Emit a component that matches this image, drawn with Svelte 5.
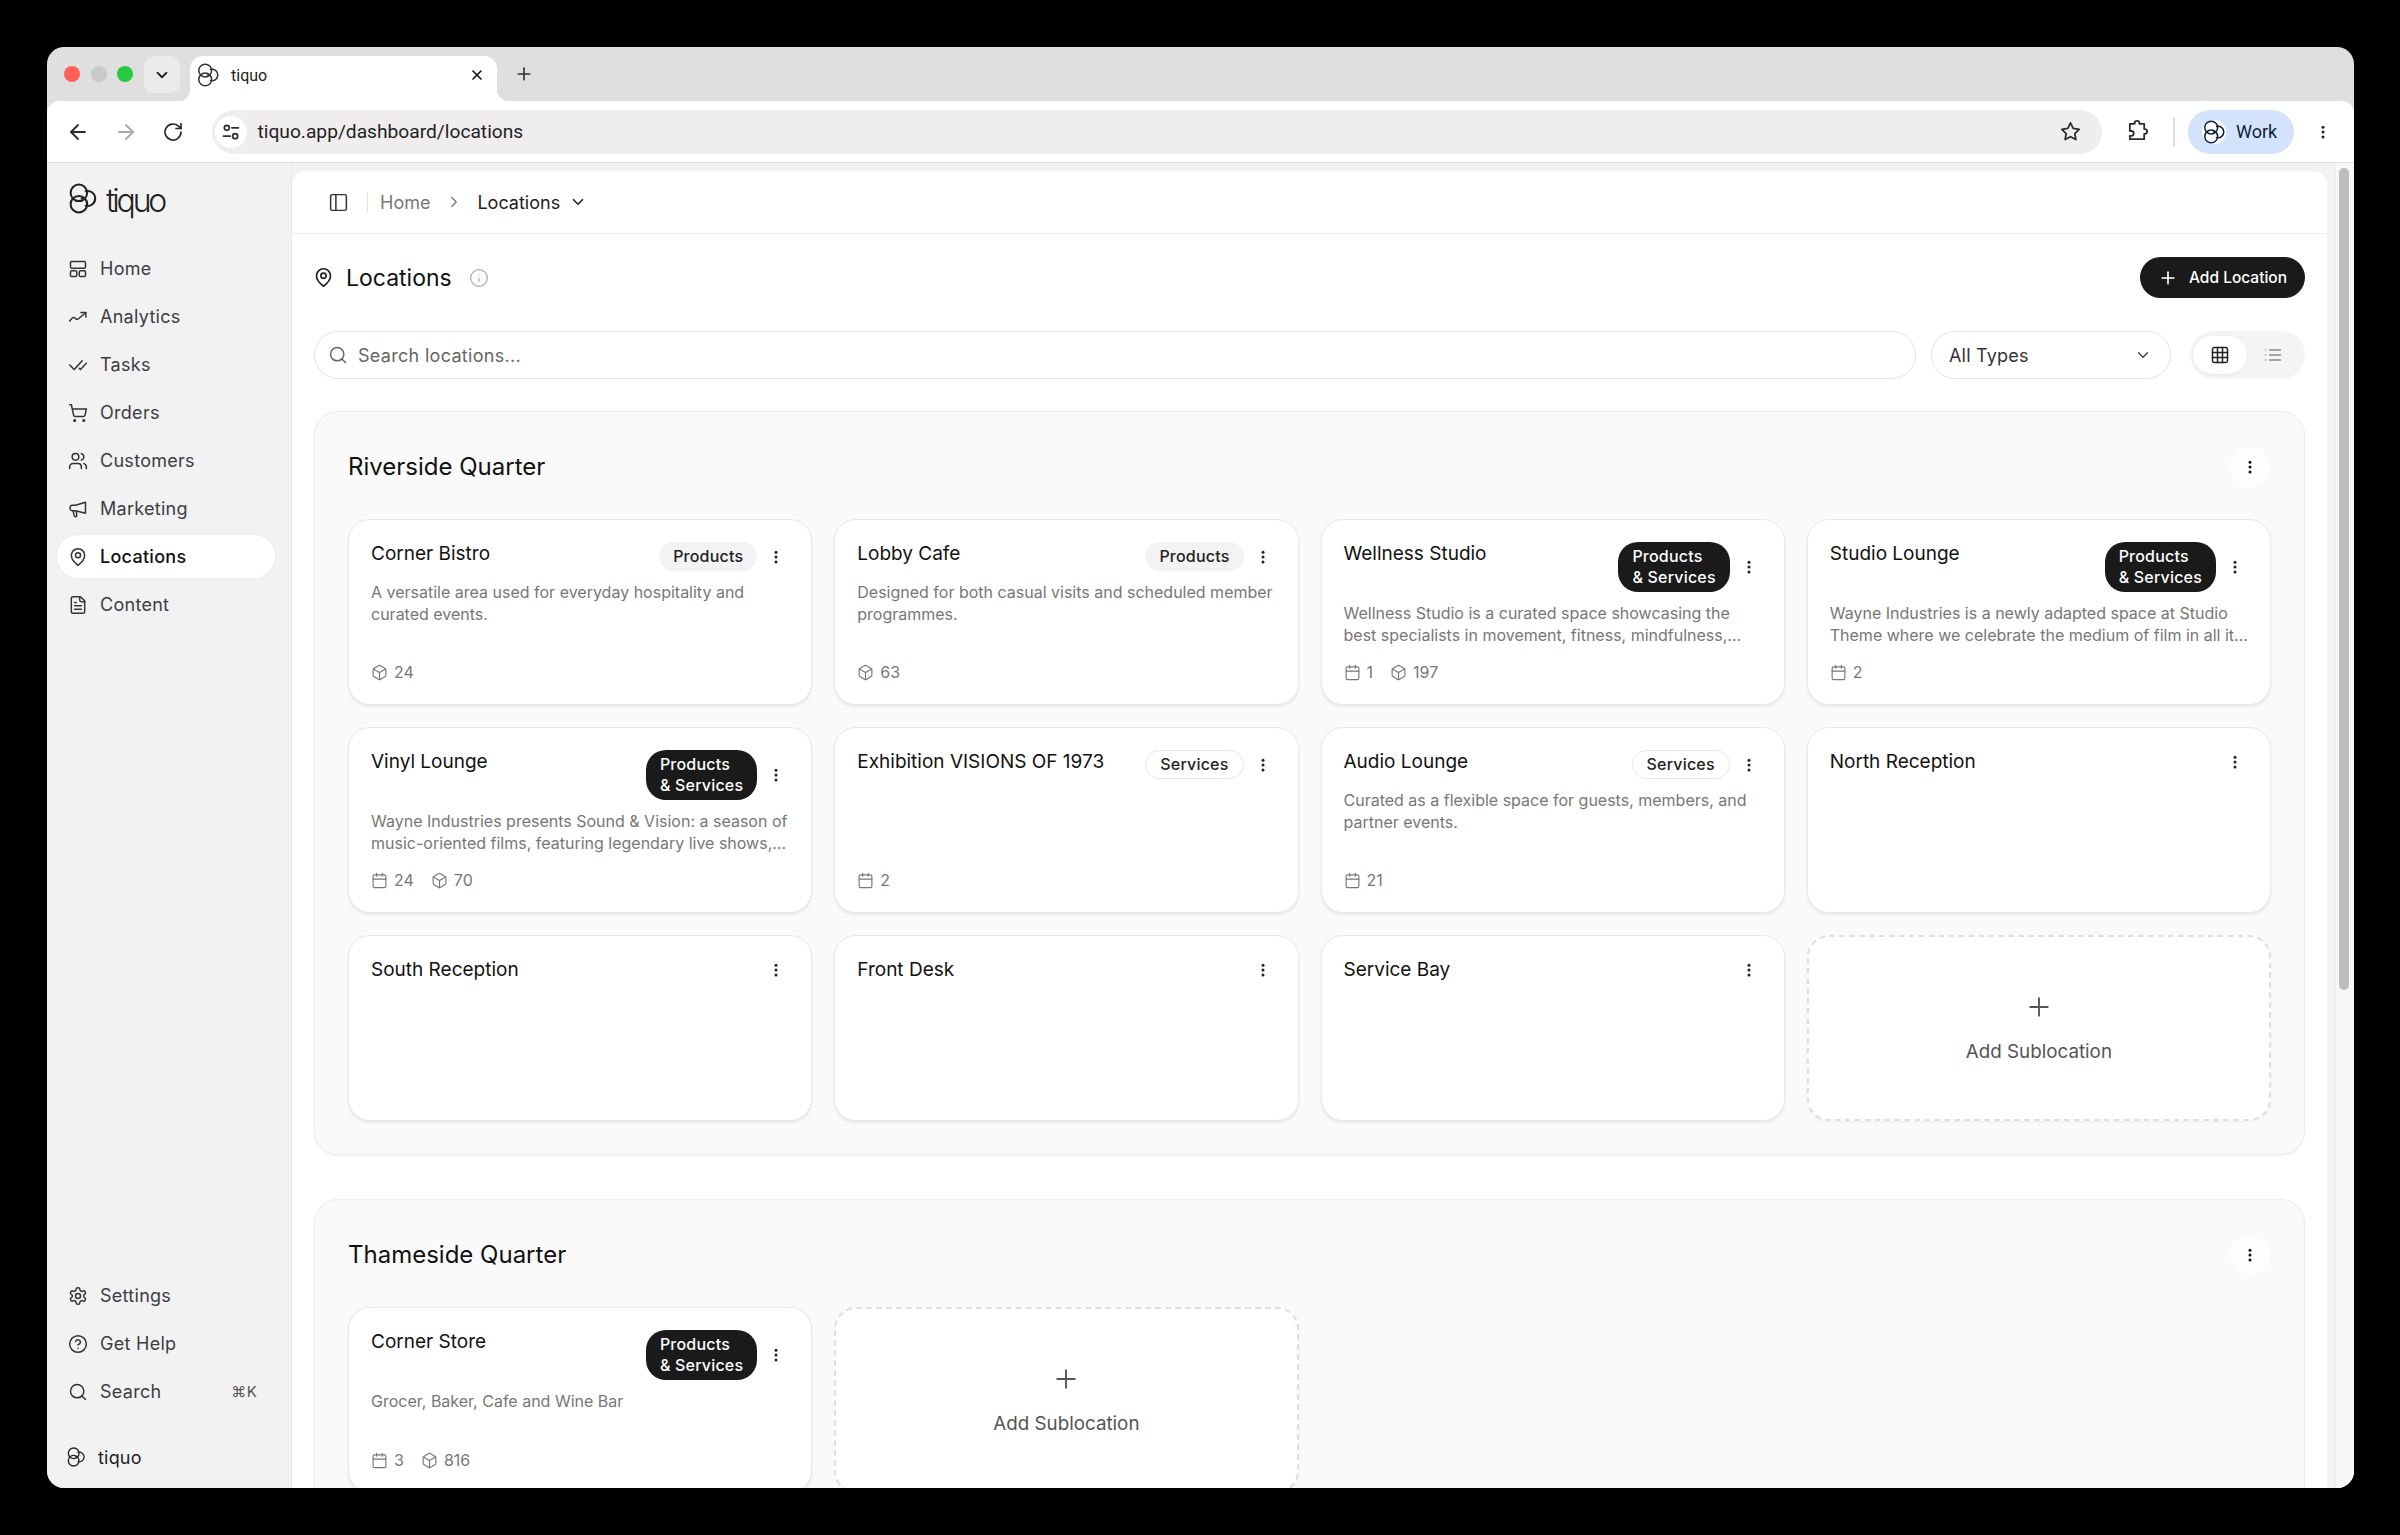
<script>
  const icons = {
    home: '<rect x="3" y="3" width="18" height="8" rx="1.5"/><rect x="3" y="14" width="7.5" height="7" rx="1.5"/><rect x="13.5" y="14" width="7.5" height="7" rx="1.5"/>',
    trend: '<path d="M2 17c2-3 3.500-4.500 5-4.500s2.500 2.500 4 2.500S17 10 21 7"/><path d="M15.500 6.500H21.500V12"/>',
    tasks: '<path d="M17 7 7.500 17.500 2 12"/><path d="m22 10-7 7.500-1.500-1.500"/>',
    cart: '<circle cx="8" cy="21" r="1"/><circle cx="19" cy="21" r="1"/><path d="M2.050 2.050h2l2.660 12.420a2 2 0 0 0 2 1.580h9.780a2 2 0 0 0 1.950-1.570l1.650-7.430H5.120"/>',
    users: '<path d="M16 21v-2a4 4 0 0 0-4-4H6a4 4 0 0 0-4 4v2"/><circle cx="9" cy="7" r="4"/><path d="M22 21v-2a4 4 0 0 0-3-3.870"/><path d="M16 3.130a4 4 0 0 1 0 7.750"/>',
    megaphone: '<path d="M21 4v13L9 14H5a2.500 2.500 0 0 1-2.500-2.500V10A2.500 2.500 0 0 1 5 7.500h4z"/><path d="m6 14 1.500 6a1.500 1.500 0 0 0 3-.500L10 14.500"/>',
    pin: '<path d="M20 10c0 6-8 12-8 12s-8-6-8-12a8 8 0 0 1 16 0Z"/><circle cx="12" cy="10" r="3"/>',
    file: '<path d="M15 2H6a2 2 0 0 0-2 2v16a2 2 0 0 0 2 2h12a2 2 0 0 0 2-2V7Z"/><path d="M14 2v4a2 2 0 0 0 2 2h4"/><path d="M16 13H8"/><path d="M16 17H8"/><path d="M10 9H8"/>',
    gear: '<path d="M12.220 2h-.440a2 2 0 0 0-2 2v.180a2 2 0 0 1-1 1.730l-.430.250a2 2 0 0 1-2 0l-.150-.080a2 2 0 0 0-2.730.730l-.220.380a2 2 0 0 0 .730 2.730l.150.100a2 2 0 0 1 1 1.720v.510a2 2 0 0 1-1 1.740l-.150.090a2 2 0 0 0-.730 2.730l.220.380a2 2 0 0 0 2.730.730l.150-.080a2 2 0 0 1 2 0l.430.250a2 2 0 0 1 1 1.730V20a2 2 0 0 0 2 2h.440a2 2 0 0 0 2-2v-.180a2 2 0 0 1 1-1.730l.430-.250a2 2 0 0 1 2 0l.150.080a2 2 0 0 0 2.730-.730l.220-.390a2 2 0 0 0-.730-2.730l-.150-.080a2 2 0 0 1-1-1.740v-.500a2 2 0 0 1 1-1.740l.150-.090a2 2 0 0 0 .730-2.730l-.220-.380a2 2 0 0 0-2.730-.730l-.150.080a2 2 0 0 1-2 0l-.430-.250a2 2 0 0 1-1-1.730V4a2 2 0 0 0-2-2z"/><circle cx="12" cy="12" r="3"/>',
    help: '<circle cx="12" cy="12" r="10"/><path d="M9.090 9a3 3 0 0 1 5.830 1c0 2-3 3-3 3"/><path d="M12 17h.010"/>',
    search: '<circle cx="11" cy="11" r="8"/><path d="m21 21-4.300-4.300"/>',
    box: '<path d="M21 8a2 2 0 0 0-1-1.730l-7-4a2 2 0 0 0-2 0l-7 4A2 2 0 0 0 3 8v8a2 2 0 0 0 1 1.730l7 4a2 2 0 0 0 2 0l7-4A2 2 0 0 0 21 16Z"/><path d="m3.300 7 8.700 5 8.700-5"/><path d="M12 22V12"/>',
    calendar: '<rect x="3" y="4" width="18" height="18" rx="2"/><path d="M16 2v4"/><path d="M8 2v4"/><path d="M3 10h18"/>',
    panel: '<rect x="3" y="3" width="18" height="18" rx="2"/><path d="M9 3v18"/>',
    info: '<circle cx="12" cy="12" r="10"/><path d="M12 16v-4"/><path d="M12 8h.010"/>',
    grid: '<rect x="3" y="3" width="18" height="18" rx="2"/><path d="M3 9h18"/><path d="M3 15h18"/><path d="M9 3v18"/><path d="M15 3v18"/>',
    list: '<path d="M3 6h.010"/><path d="M3 12h.010"/><path d="M3 18h.010"/><path d="M8 6h13"/><path d="M8 12h13"/><path d="M8 18h13"/>',
    plus: '<path d="M5 12h14"/><path d="M12 5v14"/>',
    down: '<path d="m6 9 6 6 6-6"/>',
    right: '<path d="m9 18 6-6-6-6"/>',
    close: '<path d="M18 6 6 18"/><path d="m6 6 12 12"/>',
    back: '<path d="m12 19-7-7 7-7"/><path d="M19 12H5"/>',
    forward: '<path d="M5 12h14"/><path d="m12 5 7 7-7 7"/>',
    reload: '<path d="M20 12a8 8 0 1 1-2.500-5.800L20 8.500"/><path d="M20 3.500v5h-5"/>',
    tune: '<circle cx="7" cy="7" r="3"/><path d="M13 7h8"/><circle cx="17" cy="17" r="3"/><path d="M3 17h8"/>',
    star: '<path d="m12 3 2.800 5.800 6.200.900-4.500 4.400 1.100 6.300L12 17.400l-5.600 3 1.100-6.300L3 9.700l6.200-.900z"/>',
    puzzle: '<path d="M4 4h5V3.500a2.500 2.500 0 0 1 5 0V4h5v5.500h.500a2.500 2.500 0 0 1 0 5H19V20H4v-3.500h1.500a2.500 2.500 0 0 0 0-5H4z"/>',
    logo: '<circle cx="9.200" cy="7.600" r="6.400"/><circle cx="9.200" cy="16.400" r="6.400"/><path d="M14.500 6.400a5.800 5.800 0 1 1 0 11.200"/><path d="M13.850 12h-2.500"/>'
  };

  const topNav = [
    ["home", "Home"],
    ["trend", "Analytics"],
    ["tasks", "Tasks"],
    ["cart", "Orders"],
    ["users", "Customers"],
    ["megaphone", "Marketing"],
    ["pin", "Locations"],
    ["file", "Content"]
  ];

  const both = "Products\n& Services";

  const riverside = [
    { name: "Corner Bistro", badge: "Products", kind: "soft", desc: "A versatile area used for everyday hospitality and curated events.", box: 24 },
    { name: "Lobby Cafe", badge: "Products", kind: "soft", desc: "Designed for both casual visits and scheduled member programmes.", box: 63 },
    { name: "Wellness Studio", badge: both, kind: "dark", desc: "Wellness Studio is a curated space showcasing the best specialists in movement, fitness, mindfulness,...", cal: 1, box: 197 },
    { name: "Studio Lounge", badge: both, kind: "dark", desc: "Wayne Industries is a newly adapted space at Studio Theme where we celebrate the medium of film in all it...", cal: 2 },
    { name: "Vinyl Lounge", badge: both, kind: "dark", desc: "Wayne Industries presents Sound & Vision: a season of music-oriented films, featuring legendary live shows,...", cal: 24, box: 70 },
    { name: "Exhibition VISIONS OF 1973", badge: "Services", kind: "outline", cal: 2 },
    { name: "Audio Lounge", badge: "Services", kind: "outline", desc: "Curated as a flexible space for guests, members, and partner events.", cal: 21 },
    { name: "North Reception" },
    { name: "South Reception" },
    { name: "Front Desk" },
    { name: "Service Bay" }
  ];

  const thameside = [
    { name: "Corner Store", badge: both, kind: "dark", desc: "Grocer, Baker, Cafe and Wine Bar", cal: 3, box: 816 }
  ];

  const sections = [
    { title: "Riverside Quarter", cards: riverside },
    { title: "Thameside Quarter", cards: thameside }
  ];
</script>

{#snippet icon(name, size = 18, weight = 2)}
  <svg class="icon" width={size} height={size} viewBox="0 0 24 24" fill="none" stroke="currentColor" stroke-width={weight} stroke-linecap="round" stroke-linejoin="round">
    {@html icons[name]}
  </svg>
{/snippet}

{#snippet kebab()}
  <svg class="icon" width="18" height="18" viewBox="0 0 24 24" fill="currentColor"><circle cx="12" cy="5.500" r="2"/><circle cx="12" cy="12" r="2"/><circle cx="12" cy="18.500" r="2"/></svg>
{/snippet}

<div class="screen">
  <div class="window">
    <div class="tabstrip">
      <div class="lights">
        <span class="dot red"></span>
        <span class="dot grey"></span>
        <span class="dot green"></span>
      </div>
      <div class="tabsearch">{@render icon("down", 18, 2.4)}</div>
      <div class="tab">
        <span class="tabicon">{@render icon("logo", 24, 1.5)}</span>
        <span class="tabtitle">tiquo</span>
        <span class="tabclose">{@render icon("close", 16, 2.4)}</span>
      </div>
      <div class="newtab">{@render icon("plus", 20, 2)}</div>
    </div>

    <div class="toolbar">
      <span class="navbtn">{@render icon("back", 24, 1.8)}</span>
      <span class="navbtn off">{@render icon("forward", 24, 1.8)}</span>
      <span class="navbtn">{@render icon("reload", 24, 1.7)}</span>
      <div class="omnibox">
        <span class="sitechip">{@render icon("tune", 20, 2)}</span>
        <span class="url">tiquo.app/dashboard/locations</span>
        <span class="star">{@render icon("star", 23, 1.8)}</span>
      </div>
      <span class="ext">{@render icon("puzzle", 23, 1.9)}</span>
      <span class="tbsep"></span>
      <div class="profile">
        <span class="profileicon">{@render icon("logo", 24, 1.5)}</span>
        <span>Work</span>
      </div>
      <span class="chromemenu">{@render kebab()}</span>
    </div>

    <div class="app">
      <aside class="sidebar">
        <div class="brand">
          <span class="brandmark">{@render icon("logo", 31, 1.6)}</span>
          <span class="wordmark">tiquo</span>
        </div>
        <nav class="nav">
          {#each topNav as [ic, label]}
            <div class="navitem" class:active={label === "Locations"}>
              {@render icon(ic, 20, 1.8)}
              <span>{label}</span>
            </div>
          {/each}
        </nav>
        <div class="nav bottom">
          <div class="navitem">{@render icon("gear", 20, 1.8)}<span>Settings</span></div>
          <div class="navitem">{@render icon("help", 20, 1.8)}<span>Get Help</span></div>
          <div class="navitem">
            {@render icon("search", 20, 1.8)}<span>Search</span>
            <kbd>⌘K</kbd>
          </div>
        </div>
        <div class="org">
          {@render icon("logo", 20, 1.6)}
          <span>tiquo</span>
        </div>
      </aside>

      <main class="main">
        <header class="crumbs">
          <span class="panelbtn">{@render icon("panel", 21, 1.7)}</span>
          <span class="crumbsep"></span>
          <span class="crumb">Home</span>
          <span class="crumbarrow">{@render icon("right", 18, 1.7)}</span>
          <span class="crumb current">Locations</span>
          <span class="crumbdown">{@render icon("down", 18, 2.2)}</span>
        </header>

        <div class="content">
          <div class="titlerow">
            <span class="titlepin">{@render icon("pin", 21, 1.9)}</span>
            <h1>Locations</h1>
            <span class="titleinfo">{@render icon("info", 20, 1.5)}</span>
            <button class="addbtn">{@render icon("plus", 20, 2)}<span>Add Location</span></button>
          </div>

          <div class="filters">
            <div class="searchbox">
              {@render icon("search", 20, 1.8)}
              <span>Search locations...</span>
            </div>
            <div class="select">
              <span>All Types</span>
              {@render icon("down", 18, 1.6)}
            </div>
            <div class="viewtoggle">
              <span class="viewbtn on">{@render icon("grid", 20, 1.8)}</span>
              <span class="viewbtn">{@render icon("list", 20, 1.6)}</span>
            </div>
          </div>

          {#each sections as section}
            <section class="group">
              <div class="grouphead">
                <h2>{section.title}</h2>
                <span class="groupmenu">{@render kebab()}</span>
              </div>
              <div class="cards">
                {#each section.cards as card}
                  <article class="card">
                    <div class="cardhead">
                      <h3>{card.name}</h3>
                      {#if card.badge}
                        <span class="badge {card.kind}">{card.badge}</span>
                      {/if}
                      <span class="cardmenu">{@render kebab()}</span>
                    </div>
                    {#if card.desc}
                      <p>{card.desc}</p>
                    {/if}
                    {#if card.cal || card.box}
                      <div class="stats">
                        {#if card.cal}
                          <span class="stat">{@render icon("calendar", 17, 1.6)}{card.cal}</span>
                        {/if}
                        {#if card.box}
                          <span class="stat">{@render icon("box", 17, 1.6)}{card.box}</span>
                        {/if}
                      </div>
                    {/if}
                  </article>
                {/each}
                <div class="addcard">
                  {@render icon("plus", 30, 1.5)}
                  <span>Add Sublocation</span>
                </div>
              </div>
            </section>
          {/each}
        </div>
      </main>

      <div class="scrolltrack"><div class="scrollthumb"></div></div>
    </div>
  </div>
</div>

<style>
  :global(body) {
    margin: 0;
    background: #000;
    font-family: Inter, "Liberation Sans", sans-serif;
  }

  .icon {
    display: block;
    flex: none;
  }

  .screen {
    width: 2400px;
    height: 1535px;
    padding: 47px 46px 47px 47px;
    box-sizing: border-box;
    overflow: hidden;
  }

  .window {
    height: 100%;
    display: flex;
    flex-direction: column;
    background: #dfdfdf;
    border-radius: 17px;
    overflow: hidden;
  }

  /* browser chrome */
  .tabstrip {
    height: 54px;
    flex: none;
    display: flex;
    align-items: flex-end;
    box-sizing: border-box;
    font-family: Roboto, sans-serif;
  }

  .lights {
    display: flex;
    gap: 10.5px;
    align-self: flex-start;
    margin: 19px 0 0 17px;
  }

  .dot {
    width: 16px;
    height: 16px;
    border-radius: 50%;
  }

  .red { background: #ff5f57; }
  .grey { background: #c9c9c9; }
  .green { background: #28c840; }

  .tabsearch {
    width: 36px;
    height: 37px;
    margin: 0 10px 8px 11px;
    border-radius: 10px;
    background: #ebebeb;
    display: flex;
    align-items: center;
    justify-content: center;
    color: #222;
  }

  .tab {
    position: relative;
    width: 307px;
    height: 45px;
    padding: 0 12px 7px 6px;
    box-sizing: border-box;
    display: flex;
    align-items: center;
    background: #fff;
    border-radius: 13px 13px 0 0;
    font-size: 16px;
    color: #222;
  }

  .tab::before,
  .tab::after {
    content: "";
    position: absolute;
    bottom: 0;
    width: 12px;
    height: 12px;
  }

  .tab::before {
    left: -12px;
    background: radial-gradient(circle at 0 0, transparent 12px, #fff 12.5px);
  }

  .tab::after {
    right: -12px;
    background: radial-gradient(circle at 100% 0, transparent 12px, #fff 12.5px);
  }

  .tabicon {
    margin-right: 11px;
    color: #333;
  }

  .tabtitle {
    flex: 1;
  }

  .tabclose {
    color: #111;
  }

  .newtab {
    align-self: flex-start;
    margin: 17px 0 0 17px;
    color: #333;
  }

  .toolbar {
    height: 62px;
    flex: none;
    display: flex;
    align-items: center;
    background: #fff;
    border-radius: 12px 12px 0 0;
    border-bottom: 1px solid #dedede;
    box-sizing: border-box;
    padding: 0 22px 0 19px;
    font-family: Roboto, sans-serif;
    color: #2c2c2c;
  }

  .navbtn {
    width: 47.500px;
  }

  .navbtn.off {
    color: #a9a9a9;
  }

  .omnibox {
    flex: 1;
    height: 44px;
    margin-left: 3px;
    border-radius: 22px;
    background: #efeded;
    display: flex;
    align-items: center;
    padding: 0 20px 0 3px;
    box-sizing: border-box;
  }

  .sitechip {
    width: 32px;
    height: 32px;
    border-radius: 50%;
    background: #fff;
    display: flex;
    align-items: center;
    justify-content: center;
    margin-right: 11px;
  }

  .url {
    flex: 1;
    font-size: 19.200px;
    color: #1f1f1f;
  }

  .ext {
    margin: 0 24px 0 24px;
  }

  .tbsep {
    width: 2px;
    height: 28px;
    background: #dadada;
    margin-right: 13px;
  }

  .profile {
    width: 106px;
    height: 44px;
    border-radius: 22px;
    background: #d3e3fd;
    display: flex;
    align-items: center;
    box-sizing: border-box;
    padding-left: 14px;
    gap: 10px;
    font-size: 18px;
    color: #0b1f40;
  }

  .profileicon {
    background: #fff;
    border-radius: 50%;
  }

  .chromemenu {
    margin-left: 20px;
    color: #222;
  }

  /* app */
  .app {
    flex: 1;
    min-height: 0;
    display: flex;
    background: #f2f2f3;
  }

  .sidebar {
    width: 245px;
    flex: none;
    display: flex;
    flex-direction: column;
    border-right: 1px solid #e6e6e6;
    box-sizing: border-box;
    padding: 0 16px 0 10px;
  }

  .brand {
    height: 64px;
    margin-top: 20px;
    display: flex;
    align-items: flex-start;
    padding-left: 10px;
    color: #222;
  }

  .wordmark {
    font-size: 32px;
    font-weight: 300;
    letter-spacing: -3.200px;
    line-height: 36px;
    margin-left: 8px;
    color: #1f1f1f;
  }

  .nav {
    display: flex;
    flex-direction: column;
    gap: 5px;
  }

  .nav.bottom {
    margin-top: auto;
  }

  .navitem {
    height: 43px;
    display: flex;
    align-items: center;
    gap: 12px;
    padding-left: 11px;
    font-size: 18px;
    letter-spacing: 0.280px;
    color: #3d3d42;
    border-radius: 22px;
  }

  .navitem .icon {
    color: #333;
  }

  .navitem.active {
    background: #fff;
    color: #111;
    font-weight: 500;
    box-shadow: 0 0 4px rgba(0, 0, 0, 0.03);
  }

  kbd {
    margin-left: auto;
    margin-right: 18px;
    font-family: Inter, sans-serif;
    font-size: 15px;
    color: #555;
  }

  .org {
    height: 40px;
    margin: 24px 0 11px 9px;
    display: flex;
    align-items: center;
    gap: 12px;
    font-size: 18px;
    letter-spacing: 0.200px;
    color: #222;
  }

  .main {
    flex: 1;
    min-width: 0;
    margin-top: 8px;
    background: #fff;
    border-radius: 14px 14px 0 0;
    display: flex;
    flex-direction: column;
    overflow: hidden;
  }

  .crumbs {
    height: 63px;
    flex: none;
    box-sizing: border-box;
    border-bottom: 1px solid #ececec;
    display: flex;
    align-items: center;
    padding-left: 36px;
    font-size: 18px;
    color: #777;
  }

  .panelbtn {
    color: #333;
  }

  .crumbsep {
    width: 1px;
    height: 20px;
    background: #e2e2e2;
    margin: 0 12px 0 18px;
  }

  .crumbarrow {
    margin: 0 14px 0 15px;
    color: #777;
  }

  .crumb.current {
    color: #222;
  }

  .crumbdown {
    margin-left: 9px;
    color: #222;
  }

  .content {
    flex: 1;
    padding: 23px 22px 0;
    min-height: 0;
  }

  .titlerow {
    height: 41px;
    display: flex;
    align-items: center;
  }

  .titlepin {
    margin-left: -1px;
    color: #222;
  }

  h1 {
    margin: 0 0 0 12px;
    font-size: 23px;
    font-weight: 400;
    color: #111;
  }

  .titleinfo {
    margin-left: 17px;
    color: #aaa;
  }

  .addbtn {
    margin-left: auto;
    height: 41px;
    width: 165px;
    border: 0;
    border-radius: 21px;
    background: #1a1a1a;
    color: #fff;
    display: flex;
    align-items: center;
    justify-content: center;
    gap: 11px;
    font-family: inherit;
    font-size: 15.500px;
    font-weight: 500;
    padding: 0;
  }

  .filters {
    margin-top: 33px;
    display: flex;
    gap: 15px;
    height: 48px;
  }

  .searchbox {
    flex: 1;
    display: flex;
    align-items: center;
    gap: 10px;
    padding-left: 13px;
    border: 1px solid #e4e4e4;
    border-radius: 24px;
    font-size: 18px;
    letter-spacing: 0.300px;
    color: #666;
  }

  .select {
    width: 240px;
    box-sizing: border-box;
    display: flex;
    align-items: center;
    justify-content: space-between;
    padding: 0 18px 0 17px;
    border: 1px solid #e4e4e4;
    border-radius: 24px;
    font-size: 18px;
    letter-spacing: 0.200px;
    color: #333;
  }

  .viewtoggle {
    width: 115px;
    margin-left: 4px;
    box-sizing: border-box;
    padding: 5px 3px;
    display: flex;
    border-radius: 24px;
    background: #f4f4f4;
  }

  .viewbtn {
    width: 52px;
    display: flex;
    align-items: center;
    justify-content: center;
    border-radius: 19px;
    color: #888;
  }

  .viewbtn.on {
    width: 54px;
    background: #fff;
    color: #222;
    box-shadow: 0 1px 3px rgba(0, 0, 0, 0.06);
  }

  .group {
    margin-top: 32px;
    padding: 33px;
    background: #fafafa;
    border: 1px solid #ececec;
    border-radius: 24px;
    margin-bottom: 44px;
    box-shadow: 0 1px 2px rgba(0, 0, 0, 0.05);
  }

  .group + .group {
    margin-top: 0;
  }

  .grouphead {
    height: 44px;
    display: flex;
    align-items: center;
    justify-content: space-between;
    margin-bottom: 30px;
  }

  h2 {
    margin: 0 0 2px;
    font-size: 24px;
    font-weight: 400;
    color: #111;
  }

  .groupmenu {
    width: 40px;
    height: 40px;
    margin-right: 1px;
    display: flex;
    align-items: center;
    justify-content: center;
    border-radius: 50%;
    background: rgba(255, 255, 255, 0.6);
    color: #111;
  }

  .cards {
    display: grid;
    grid-template-columns: repeat(4, 1fr);
    grid-auto-rows: 186px;
    gap: 22px;
  }

  .card,
  .addcard {
    border-radius: 22px;
    background: #fff;
    box-sizing: border-box;
  }

  .card {
    padding: 22px 21px 21px 22px;
    border: 1px solid #e9e9e9;
    box-shadow: 0 2px 3px rgba(0, 0, 0, 0.08);
    display: flex;
    flex-direction: column;
  }

  .cardhead {
    display: flex;
    align-items: flex-start;
  }

  h3 {
    flex: 1;
    margin: 1px 0 0;
    font-size: 19px;
    line-height: 22px;
    font-weight: 400;
    color: #111;
  }

  .badge {
    flex: none;
    padding: 4px 14px;
    border-radius: 16px;
    font-size: 16px;
    font-weight: 500;
    letter-spacing: 0.200px;
    line-height: 21px;
    white-space: pre-line;
  }

  .badge.soft {
    background: #f3f3f3;
    color: #222;
  }

  .badge.dark {
    background: #1a1a1a;
    color: #fff;
    border-radius: 20px;
  }

  .badge.outline {
    background: #fff;
    color: #222;
    border: 1px solid #e6e6e6;
    padding: 3px 14px;
  }

  .cardmenu {
    width: 28px;
    align-self: center;
    display: flex;
    justify-content: center;
    margin-left: 5px;
    color: #222;
  }

  p {
    margin: 11px 1px 0 0;
    font-size: 16px;
    line-height: 21.500px;
    color: #777;
  }

  .stats {
    margin-top: auto;
    display: flex;
    gap: 17px;
    font-size: 16px;
    line-height: 22px;
    color: #777;
  }

  .stat {
    display: flex;
    align-items: center;
    gap: 6px;
  }

  .addcard {
    border: 2px dashed #dfdfdf;
    box-shadow: 0 1px 3px rgba(0, 0, 0, 0.05);
    display: flex;
    flex-direction: column;
    align-items: center;
    justify-content: center;
    gap: 18px;
    font-size: 18.800px;
    color: #555;
    padding-bottom: 2px;
  }

  .scrolltrack {
    width: 18px;
    margin-left: 8px;
    flex: none;
    background: #f7f7f7;
    border-left: 1px solid #ececec;
    position: relative;
  }

  .scrollthumb {
    position: absolute;
    top: 5px;
    left: 3px;
    width: 10px;
    height: 822px;
    border-radius: 5px;
    background: #bdbdbd;
  }
</style>
